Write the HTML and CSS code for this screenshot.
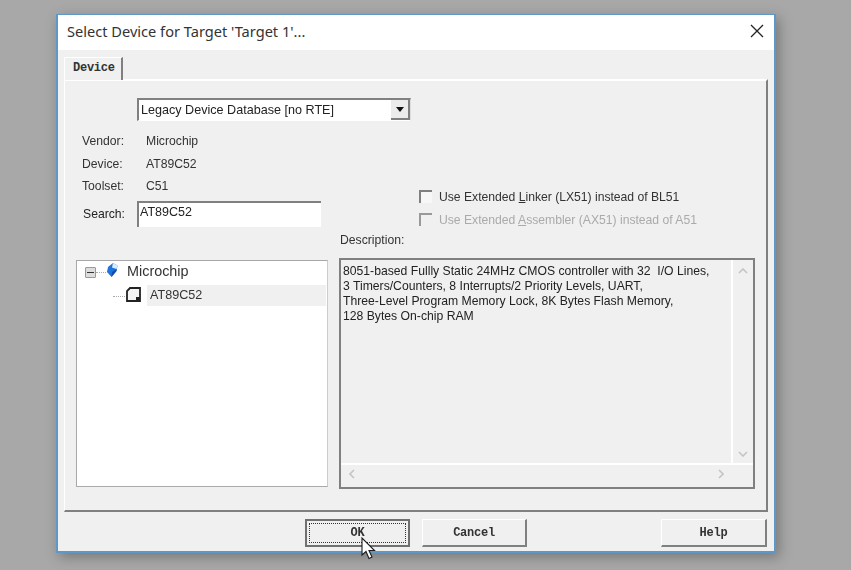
FILE: index.html
```html
<!DOCTYPE html>
<html lang="en">
<head>
    <meta charset="UTF-8">
    <title>Select Device for Target</title>
    <link rel="stylesheet" href="styles.css">
</head>
<body>
    <div class="dialog">
        <div class="titlebar">
            <span class="title">Select Device for Target 'Target 1'...</span>
            <svg class="close" width="14" height="14" viewBox="0 0 14 14"><path d="M1 1L13 13M13 1L1 13" stroke="#222" stroke-width="1.3" fill="none"/></svg>
        </div>

        <div class="content">
            <div class="tab">Device</div>
            <div class="panel">
                <div class="combo">
                    <span>Legacy Device Database [no RTE]</span>
                    <div class="combo-btn"><i></i></div>
                </div>

                <div class="middle">
                    <div class="info">
                        <div class="info-row"><span class="label">Vendor:</span><span>Microchip</span></div>
                        <div class="info-row"><span class="label">Device:</span><span>AT89C52</span></div>
                        <div class="info-row"><span class="label">Toolset:</span><span>C51</span></div>
                        <div class="search-row">
                            <span class="search-label">Search:</span>
                            <div class="search">AT89C52</div>
                        </div>
                    </div>
                    <div class="options">
                        <div class="check"><i></i><span>Use Extended <u>L</u>inker (LX51) instead of BL51</span></div>
                        <div class="check disabled"><i></i><span>Use Extended <u>A</u>ssembler (AX51) instead of A51</span></div>
                        <div class="desc-label">Description:</div>
                    </div>
                </div>

                <div class="lower">
                    <div class="tree">
                        <div class="tree-row">
                            <div class="expander"><i></i></div>
                            <div class="dots short"></div>
                            <svg class="gem" width="12" height="14" viewBox="0 0 12 14"><path d="M7 0L11.5 2.5L10.5 8L5.5 14L1 9L2 4Z" fill="#1f74d8"/><path d="M7 0L11.5 2.5L10.5 6L6 4.5Z" fill="#dcecff"/><path d="M10.5 6L10.5 8L5.5 14L6 9Z" fill="#0d4fb0"/></svg>
                            <span class="vendor">Microchip</span>
                        </div>
                        <div class="tree-row child">
                            <div class="dots"></div>
                            <svg class="chip" width="15" height="15" viewBox="0 0 15 15"><path d="M4 1H14V14H1V4Z" fill="#f4f4f4" stroke="#222" stroke-width="1.8"/><path d="M10 10H14V14H10Z" fill="#222"/></svg>
                            <span class="device">AT89C52</span>
                        </div>
                    </div>

                    <div class="desc">
                        <div class="desc-main">
                            <div class="desc-text">8051-based Fullly Static 24MHz CMOS controller with 32&nbsp; I/O Lines,<br>3 Timers/Counters, 8 Interrupts/2 Priority Levels, UART,<br>Three-Level Program Memory Lock, 8K Bytes Flash Memory,<br>128 Bytes On-chip RAM</div>
                            <div class="vscroll">
                                <svg width="10" height="6" viewBox="0 0 10 6"><path d="M1 5L5 1L9 5" stroke="#c4c4c4" stroke-width="1.6" fill="none"/></svg>
                                <svg width="10" height="6" viewBox="0 0 10 6"><path d="M1 1L5 5L9 1" stroke="#c4c4c4" stroke-width="1.6" fill="none"/></svg>
                            </div>
                        </div>
                        <div class="hscroll">
                            <svg width="6" height="10" viewBox="0 0 6 10"><path d="M5 1L1 5L5 9" stroke="#c4c4c4" stroke-width="1.6" fill="none"/></svg>
                            <svg width="6" height="10" viewBox="0 0 6 10"><path d="M1 1L5 5L1 9" stroke="#c4c4c4" stroke-width="1.6" fill="none"/></svg>
                        </div>
                    </div>
                </div>
            </div>

            <div class="footer">
                <div class="btn btn-default"><span class="focus">OK</span></div>
                <div class="btn btn-cancel">Cancel</div>
                <div class="btn btn-help">Help</div>
            </div>
        </div>

        <svg class="cursor" width="15" height="23" viewBox="0 0 15 23"><path d="M1 1V18L5 14.5L8 21.5L11 20L8 13.5H13.5Z" fill="#fff" stroke="#1c1c1c" stroke-width="1.1"/></svg>
    </div>
</body>
</html>
```

FILE: styles.css
```css
* {
    margin: 0;
    padding: 0;
    box-sizing: border-box;
}

html, body {
    height: 100%;
    overflow: hidden;
}

body {
    background: #a8a8a8;
    padding: 14px 0 0 56px;
    font-family: "Liberation Sans", Arial, sans-serif;
    font-size: 12.2px;
    color: #222;
}

.dialog {
    position: relative;
    width: 720px;
    height: 539px;
    background: #f0f0f0;
    border: 1px solid #5f97c8;
    border-width: 1px 2px 2px 2px;
    box-shadow: 3px 4px 12px rgba(60, 60, 60, 0.45);
    filter: blur(0.45px);
}

.titlebar {
    height: 35px;
    background: #fff;
    display: flex;
    align-items: center;
    justify-content: space-between;
    padding: 0 10px 3px 9px;
}

.title {
    font-family: "Noto Sans", sans-serif;
    font-size: 14.6px;
    color: #333;
}

.content {
    padding: 7px 6px 0 6px;
}

.tab {
    width: 59px;
    height: 23px;
    margin-bottom: -1px;
    position: relative;
    z-index: 1;
    background: #f0f0f0;
    border-top: 1px solid #fff;
    border-left: 1px solid #fff;
    border-right: 2px solid #808080;
    padding: 3px 0 0 8px;
    font-family: "Liberation Mono", monospace;
    font-size: 12px;
    letter-spacing: -0.25px;
    font-weight: bold;
    color: #333;
}

.panel {
    height: 433px;
    border-top: 2px solid #fff;
    border-left: 1px solid #fff;
    border-right: 2px solid #808080;
    border-bottom: 2px solid #808080;
    padding: 17px 10px 0 11px;
}

.combo {
    width: 274px;
    height: 23px;
    margin-left: 61px;
    background: #fff;
    border-top: 2px solid #808080;
    border-left: 2px solid #808080;
    border-right: 1px solid #ddd;
    border-bottom: 1px solid #fff;
    display: flex;
    align-items: center;
    justify-content: space-between;
    padding-left: 2px;
    font-size: 12.6px;
}

.combo-btn {
    width: 19px;
    height: 20px;
    background: #ececec;
    border-right: 2px solid #808080;
    border-bottom: 2px solid #808080;
    display: flex;
    align-items: center;
    justify-content: center;
}

.combo-btn i {
    border: 4px solid transparent;
    border-top: 5px solid #111;
    border-bottom: 0;
}

.middle {
    display: flex;
    height: 137px;
}

.info {
    width: 264px;
    padding: 9px 0 0 6px;
}

.info-row {
    height: 22.5px;
    display: flex;
    align-items: center;
    color: #333;
}

.label {
    width: 64px;
}

.search-row {
    display: flex;
    align-items: center;
    margin-top: 3px;
}

.search-label {
    width: 55px;
    padding-left: 1px;
}

.search {
    width: 184px;
    height: 26px;
    background: #fff;
    border-top: 2px solid #808080;
    border-left: 2px solid #808080;
    padding: 2px 0 0 1px;
    font-size: 12.5px;
}

.options {
    padding-top: 64px;
}

.check {
    height: 23px;
    display: flex;
    align-items: center;
    margin-left: 79px;
    color: #333;
    gap: 7px;
}

.check span {
    letter-spacing: -0.02px;
}

.check i {
    width: 13px;
    height: 13px;
    background: #f7f7f7;
    border-top: 2px solid #808080;
    border-left: 2px solid #808080;
}

.check.disabled {
    color: #aaa;
}

.check.disabled i {
    background: #f0f0f0;
    border-color: #999;
}

.desc-label {
    margin-top: 2px;
    color: #333;
}

.lower {
    display: flex;
    align-items: flex-end;
    justify-content: space-between;
}

.tree {
    width: 252px;
    height: 227px;
    background: #fff;
    border: 1px solid #a8a8a8;
    border-right-color: #ccc;
    border-bottom-color: #aaa;
    padding: 0 1px 0 8px;
    margin-bottom: 2px;
}

.tree-row {
    height: 20px;
    display: flex;
    align-items: center;
}

.expander {
    width: 11px;
    height: 11px;
    margin-top: 2px;
    background: #ddd;
    border: 1px solid #999;
    border-radius: 1px;
    display: flex;
    align-items: center;
    justify-content: center;
}

.expander i {
    width: 7px;
    height: 1px;
    background: #333;
}

.dots {
    width: 12px;
    border-top: 1px dotted #aaa;
    margin-top: 2px;
}

.dots.short {
    width: 10px;
}

.gem {
    margin-bottom: 3px;
}

.vendor {
    margin-left: 9px;
    font-size: 14.4px;
    color: #333;
}

.child {
    height: 21px;
    margin-left: 28px;
    margin-top: 4px;
    gap: 1px;
}

.chip {
    margin-bottom: 3px;
}

.device {
    margin-left: 5px;
    flex: 1;
    height: 21px;
    line-height: 21px;
    background: #f0f0f0;
    padding-left: 3px;
    font-size: 12.6px;
    color: #333;
}

.desc {
    width: 416px;
    height: 231px;
    margin-right: 1px;
    border: 2px solid #808080;
    display: flex;
    flex-direction: column;
}

.desc-main {
    flex: 1;
    display: flex;
    border-bottom: 2px solid #fff;
}

.desc-text {
    flex: 1;
    padding: 4px 0 0 2px;
    line-height: 15px;
    border-right: 2px solid #fff;
    color: #222;
}

.vscroll {
    width: 20px;
    padding: 8px 0 6px 0;
    display: flex;
    flex-direction: column;
    align-items: center;
    justify-content: space-between;
}

.hscroll {
    height: 22px;
    display: flex;
    align-items: center;
    justify-content: space-between;
    padding: 0 29px 4px 8px;
}

.footer {
    display: flex;
    padding: 7px 0 0 241px;
}

.btn {
    width: 105px;
    height: 28px;
    background: #f0f0f0;
    border-top: 1px solid #fff;
    border-left: 1px solid #fff;
    border-right: 2px solid #808080;
    border-bottom: 2px solid #808080;
    display: flex;
    align-items: center;
    justify-content: center;
    font-family: "Liberation Mono", monospace;
    font-weight: bold;
    font-size: 12px;
    letter-spacing: -0.25px;
    color: #333;
}

.btn-default {
    border: 2px solid #707070;
    padding: 2px;
}

.focus {
    flex: 1;
    height: 100%;
    display: flex;
    align-items: center;
    justify-content: center;
    border: 1px dotted #333;
}

.btn-cancel {
    margin-left: 12px;
}

.btn-help {
    width: 106px;
    margin-left: 134px;
}

.cursor {
    position: absolute;
    left: 303px;
    top: 522px;
}
```
